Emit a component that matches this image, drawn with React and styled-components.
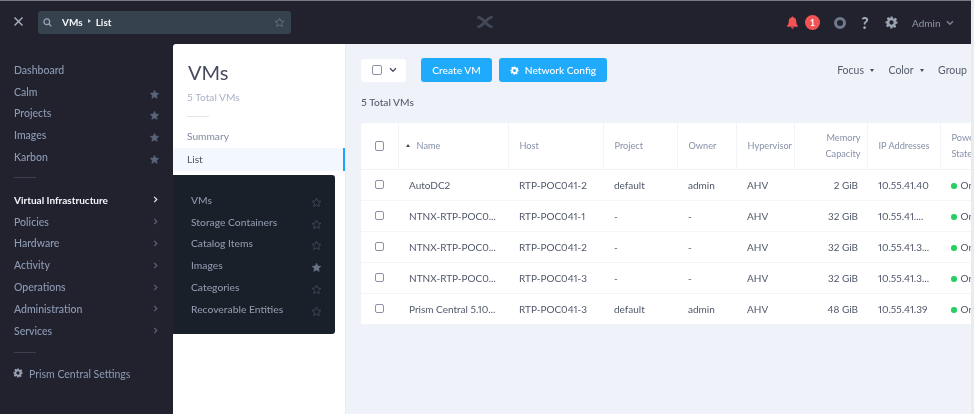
import React from 'react';
import styled, { createGlobalStyle } from 'styled-components';

const Global = createGlobalStyle`
  html, body { margin: 0; padding: 0; background: #e9ebef; }
  body { font-family: Lato, "Open Sans", sans-serif; overflow: hidden; }
  * { box-sizing: border-box; }
`;

const Page = styled.div`
  width: 971px; height: 414px; display: flex; flex-direction: column; overflow: hidden;
  background: #22222f; border-top: 1px solid #77777f; position: relative; filter: blur(0.4px);
`;
const Header = styled.header`
  height: 43px; flex: none; display: flex; align-items: center; padding: 0 0 0 13px; position: relative;
`;
const CloseBtn = styled.div`width: 11px; height: 11px; display: flex; color: #aab2c0; margin: -2px 14px 0 0;`;
const SearchBar = styled.div`
  width: 253px; height: 23px; border-radius: 3px; background: #36434f; display: flex; align-items: center;
  padding: 0 6px 0 5px; color: #f2f4f8; font-size: 10px; font-weight: 700; margin-top: -1px;
`;
const SearchIcon = styled.span`display: flex; color: #99a3b1; margin-right: 10px;`;
const Crumb = styled.span`white-space: nowrap;`;
const CrumbSep = styled.span`width: 0; height: 0; margin: 0 5px 2px 5px; border-left: 3px solid #d5dae2; border-top: 2.5px solid transparent; border-bottom: 2.5px solid transparent;`;
const SearchStar = styled.span`margin-left: auto; display: flex; color: #66717f;`;
const Logo = styled.svg`position: absolute; left: 477px; top: 15px;`;
const HeaderRight = styled.div`margin-left: auto; display: flex; align-items: center; padding-right: 17px; color: #8f98a8;`;
const Badge = styled.span`
  width: 15px; height: 15px; border-radius: 50%; background: #f45354; color: #fff; font-size: 8.5px; font-weight: 700;
  display: flex; align-items: center; justify-content: center; margin: 0 14px 0 6.5px;
`;
const Ring = styled.span`width: 12px; height: 12px; border: 3px solid #6f798c; border-radius: 50%; margin-right: 14px;`;
const Help = styled.span`font-size: 16px; font-weight: 900; color: #a0a8b6; width: 10px; margin-right: 15px; text-align: center; line-height: 1;`;
const HeaderGear = styled.span`display: flex; color: #9aa3b1; margin-right: 14px;`;
const AdminName = styled.span`font-size: 10px; color: #8f98a8; width: 28px; margin-right: 6px; white-space: nowrap;`;

const Body = styled.div`flex: 1; display: flex; min-height: 0; position: relative;`;
const Sidebar = styled.nav`width: 173px; flex: none; padding: 15px 13px 0 14px; display: flex; flex-direction: column;`;
const NavItem = styled.div`
  height: 21.8px; flex: none; display: flex; align-items: center; justify-content: space-between;
  font-size: ${p => p.$active ? 10 : 10.5}px; font-weight: ${p => p.$active ? 700 : 500};
  color: ${p => p.$active ? '#f3f5f9' : '#8d9bb4'};
`;
const NavStar = styled.span`display: flex; margin: 5px 0 0 0; color: #59637a;`;
const NavArrow = styled.span`display: flex; margin-right: 1.5px; color: ${p => p.$active ? '#e8ebf0' : '#59637a'};`;
const NavRule = styled.div`width: 22px; height: 1px; background: #3a4050; margin: ${p => p.$m || '9px 0 11px'}; flex: none;`;
const SettingsRow = styled.div`display: flex; align-items: center; gap: 6px; margin-left: -1px; font-size: 10.5px; color: #8d9bb4; height: 22px;`;
const SettingsIcon = styled.span`display: flex; color: #98a2b3; margin-top: -2px;`;

const Panel = styled.aside`
  width: 173px; flex: none; background: #fff; border-top-left-radius: 3px; border-right: 1px solid #e8ecf2;
  display: flex; flex-direction: column; padding-top: 13px;
`;
const PanelTitle = styled.h1`margin: 0 0 0 15px; font-size: 20px; font-weight: 400; color: #464c5e; line-height: 30px;`;
const PanelSub = styled.div`margin: 3px 0 0 14px; font-size: 10.2px; color: #aab2c6; line-height: 14px;`;
const PanelRule = styled.div`width: 22px; height: 1px; background: #e2e5ec; margin: 12px 0 7px 14px;`;
const PanelLink = styled.div`
  height: 23.5px; padding-left: 14px; display: flex; align-items: center; font-size: 10.2px;
  color: ${p => p.$active ? '#4f5668' : '#7f889e'};
  background: ${p => p.$active ? '#f2f8fd' : 'transparent'};
  border-right: ${p => p.$active ? '2px solid #1fa5f5' : '0'};
`;

const Flyout = styled.div`
  position: absolute; left: 173px; top: 131px; width: 162px; height: 159px; background: #1a2029;
  border-radius: 0 3px 3px 0; padding: 14px 13px 0 18px;
`;
const FlyItem = styled.div`
  height: 21.8px; display: flex; align-items: center; justify-content: space-between; font-size: 10.3px; color: #8e98ac; font-weight: 500;
`;
const FlyStar = styled.span`display: flex; margin-top: 5px; color: ${p => p.$on ? '#6b7488' : '#3f4859'};`;

const Main = styled.main`flex: 1; min-width: 0; background: #eff2f8; padding: 14px 0 0 15px; overflow: hidden;`;
const Toolbar = styled.div`display: flex; align-items: center; height: 24px;`;
const SelectBox = styled.div`
  width: 45px; height: 23px; background: #fff; border-radius: 3px; display: flex; align-items: center;
  padding: 0 9px 0 11px; justify-content: space-between; margin-right: 15px; color: #4c5366;
`;
const Check = styled.span`
  display: block; width: 9.5px; height: 9.5px; border: 1px solid #8b92a4; border-radius: 2px; background: #fff;
`;
const PrimaryBtn = styled.button`
  height: 24px; border: 0; border-radius: 3px; background: #1faafc; color: #fff; font: 500 10.2px Lato, sans-serif;
  display: flex; align-items: center; justify-content: center; gap: 6px; padding: 0; width: ${p => p.$w}px; margin-right: 7px;
`;
const ViewMenu = styled.div`margin-left: auto; display: flex; align-items: center; font-size: 10.5px; color: #555c6e; white-space: nowrap;`;
const ViewItem = styled.span`display: flex; align-items: center; gap: 6.5px; margin-right: 14px;`;
const LastViewItem = styled.span`margin-right: 4px;`;
const Caret = styled.span`width: 0; height: 0; border-top: 3px solid #454c5e; border-left: 2.5px solid transparent; border-right: 2.5px solid transparent;`;
const Total = styled.div`font-size: 10.2px; font-weight: 500; color: #555c6e; margin: 13px 0 14px; line-height: 14px;`;

const TableWrap = styled.div`width: 610px; overflow: hidden; background: #fff; border-radius: 3px 0 0 3px;`;
const Table = styled.table`border-collapse: collapse; table-layout: fixed; width: 635px; font-size: 10px; font-variant-numeric: proportional-nums;`;
const Th = styled.th`
  width: ${p => p.$w}px; height: 46px; padding: 1px 6px 0 ${p => p.$pl ?? 11}px; font-size: 9.2px; font-weight: 400; color: #8791a8; line-height: 16px;
  text-align: ${p => p.$right ? 'right' : 'left'}; border-right: 1px solid #f1f5f9; border-bottom: 1px solid #eef2f6; white-space: nowrap;
`;
const Td = styled.td`
  height: 31px; padding: 0 ${p => p.$pr ?? 6}px 0 ${p => p.$pl ?? 11}px; color: #50576a; white-space: nowrap; overflow: hidden;
  text-align: ${p => p.$right ? 'right' : 'left'}; border-bottom: 1px solid #f3f5f8;
`;
const CheckCell = styled.div`display: flex; justify-content: center; margin-top: ${p => p.$head ? -1 : 0}px; padding-left: 6px;`;
const SortMark = styled.span`
  display: inline-block; width: 0; height: 0; margin: 0 7px 2px 0; border-bottom: 3px solid #454c5e;
  border-left: 2.5px solid transparent; border-right: 2.5px solid transparent;
`;
const Dot = styled.span`display: inline-block; width: 5.5px; height: 5.5px; border-radius: 50%; background: #25cf64; margin-right: 4px;`;

const STAR = 'M12 2.5l2.9 6.2 6.8.8-5 4.6 1.3 6.7-6-3.4-6 3.4 1.3-6.7-5-4.6 6.8-.8z';
const Star = ({ size = 11, filled }) => (
  <svg width={size} height={size} viewBox="0 0 24 24" fill={filled ? 'currentColor' : 'none'} stroke="currentColor" strokeWidth={filled ? 1 : 2} strokeLinejoin="round">
    <path d={STAR} />
  </svg>
);
const Chevron = ({ size = 7 }) => (
  <svg width={size} height={size} viewBox="0 0 8 8" fill="none" stroke="currentColor" strokeWidth="1.4"><path d="M2.5 1l3 3-3 3" /></svg>
);
const Down = ({ color = 'currentColor' }) => (
  <svg width="8" height="6" viewBox="0 0 8 6" fill="none" stroke={color} strokeWidth="1.4"><path d="M1 1.2l3 3 3-3" /></svg>
);
const Gear = ({ size = 10 }) => (
  <svg width={size} height={size} viewBox="0 0 24 24" fill="currentColor">
    <path fillRule="evenodd" d="M10 1h4l.7 3.2 1.9.8 2.8-1.8 2.8 2.8-1.8 2.8.8 1.9L23 10v4l-3.2.7-.8 1.9 1.8 2.8-2.8 2.8-2.8-1.8-1.9.8L14 23h-4l-.7-3.2-1.9-.8-2.8 1.8-2.8-2.8 1.8-2.8-.8-1.9L1 14v-4l3.2-.7.8-1.9-1.8-2.8 2.8-2.8 2.8 1.8 1.9-.8zM12 8a4 4 0 100 8 4 4 0 000-8z" />
  </svg>
);

const primary = [['Dashboard', false], ['Calm', true], ['Projects', true], ['Images', true], ['Karbon', true]];
const groups = ['Virtual Infrastructure', 'Policies', 'Hardware', 'Activity', 'Operations', 'Administration', 'Services'];
const fly = [['VMs'], ['Storage Containers'], ['Catalog Items'], ['Images', true], ['Categories'], ['Recoverable Entities']];
const rows = [
  ['AutoDC2', 'RTP-POC041-2', 'default', 'admin', '2 GiB', '10.55.41.40'],
  ['NTNX-RTP-POC0...', 'RTP-POC041-1', '-', '-', '32 GiB', '10.55.41....'],
  ['NTNX-RTP-POC0...', 'RTP-POC041-2', '-', '-', '32 GiB', '10.55.41.3...'],
  ['NTNX-RTP-POC0...', 'RTP-POC041-3', '-', '-', '32 GiB', '10.55.41.3...'],
  ['Prism Central 5.10...', 'RTP-POC041-3', 'default', 'admin', '48 GiB', '10.55.41.39'],
];

export default function App() {
  return (
    <Page>
      <Global />
      <Header>
        <CloseBtn>
          <svg width="11" height="11" viewBox="0 0 11 11" stroke="currentColor" strokeWidth="1.4"><path d="M1.5 1.5l8 8M9.500 1.500l-8 8" /></svg>
        </CloseBtn>
        <SearchBar>
          <SearchIcon>
            <svg width="9" height="9" viewBox="0 0 10 10" fill="none" stroke="currentColor" strokeWidth="1.4"><circle cx="4.2" cy="4.2" r="3.2" /><path d="M6.6 6.6L9.3 9.3" /></svg>
          </SearchIcon>
          <Crumb>VMs</Crumb><CrumbSep /><Crumb>List</Crumb>
          <SearchStar><Star size={11} /></SearchStar>
        </SearchBar>
        <Logo width="16" height="12" viewBox="0 0 16 12" fill="none" stroke="#434958" strokeWidth="2.8">
          <path d="M0.500 1.200C4 1.200 5 3 8 6C11 9 12 10.800 15.500 10.800" />
          <path d="M15.500 1.200C12 1.200 11 3 8 6C5 9 4 10.800 0.500 10.800" />
        </Logo>
        <HeaderRight>
          <svg width="13" height="13" viewBox="0 0 14 14" fill="#f45354"><path d="M7 0.5c.7 0 1.1.4 1.1 1 2 .4 2.9 2 2.9 4 0 3 .7 4 1.8 5.2v.8H1.2v-.8C2.3 9.5 3 8.500 3 5.500c0-2 .9-3.600 2.900-4 0-.6.4-1 1.100-1zM5.500 12.200h3c0 1-.6 1.500-1.500 1.500s-1.500-.5-1.500-1.500z" /></svg>
          <Badge>1</Badge>
          <Ring />
          <Help>?</Help>
          <HeaderGear><Gear size={13} /></HeaderGear>
          <AdminName>Admin</AdminName>
          <Down color="#7c8698" />
        </HeaderRight>
      </Header>
      <Body>
        <Sidebar>
          {primary.map(([label, star]) => (
            <NavItem key={label}>{label}{star && <NavStar><Star size={11} filled /></NavStar>}</NavItem>
          ))}
          <NavRule />
          {groups.map((g, i) => (
            <NavItem key={g} $active={i === 0}>{g}<NavArrow $active={i === 0}><Chevron /></NavArrow></NavItem>
          ))}
          <NavRule $m="10px 0 10px" />
          <SettingsRow><SettingsIcon><Gear /></SettingsIcon>Prism Central Settings</SettingsRow>
        </Sidebar>
        <Panel>
          <PanelTitle>VMs</PanelTitle>
          <PanelSub>5 Total VMs</PanelSub>
          <PanelRule />
          <PanelLink>Summary</PanelLink>
          <PanelLink $active>List</PanelLink>
        </Panel>
        <Flyout>
          {fly.map(([label, on]) => (
            <FlyItem key={label}>{label}<FlyStar $on={on}><Star size={11} filled={on} /></FlyStar></FlyItem>
          ))}
        </Flyout>
        <Main>
          <Toolbar>
            <SelectBox><Check /><Down /></SelectBox>
            <PrimaryBtn $w={71}>Create VM</PrimaryBtn>
            <PrimaryBtn $w={108}><Gear size={9} />Network Config</PrimaryBtn>
            <ViewMenu>
              <ViewItem>Focus<Caret /></ViewItem>
              <ViewItem>Color<Caret /></ViewItem>
              <LastViewItem>Group</LastViewItem>
            </ViewMenu>
          </Toolbar>
          <Total>5 Total VMs</Total>
          <TableWrap>
            <Table>
              <thead>
                <tr>
                  <Th $w={37} $pl={0}><CheckCell $head><Check /></CheckCell></Th>
                  <Th $w={110} $pl={7}><SortMark />Name</Th>
                  <Th $w={95}>Host</Th>
                  <Th $w={74}>Project</Th>
                  <Th $w={59}>Owner</Th>
                  <Th $w={58}>Hypervisor</Th>
                  <Th $w={73} $right>Memory<br />Capacity</Th>
                  <Th $w={73}>IP Addresses</Th>
                  <Th $w={56}>Power<br />State</Th>
                </tr>
              </thead>
              <tbody>
                {rows.map((r, i) => (
                  <tr key={i}>
                    <Td $pl={0}><CheckCell><Check /></CheckCell></Td>
                    <Td>{r[0]}</Td>
                    <Td>{r[1]}</Td>
                    <Td>{r[2]}</Td>
                    <Td>{r[3]}</Td>
                    <Td>AHV</Td>
                    <Td $right $pr={9}>{r[4]}</Td>
                    <Td>{r[5]}</Td>
                    <Td><Dot />On</Td>
                  </tr>
                ))}
              </tbody>
            </Table>
          </TableWrap>
        </Main>
      </Body>
    </Page>
  );
}
